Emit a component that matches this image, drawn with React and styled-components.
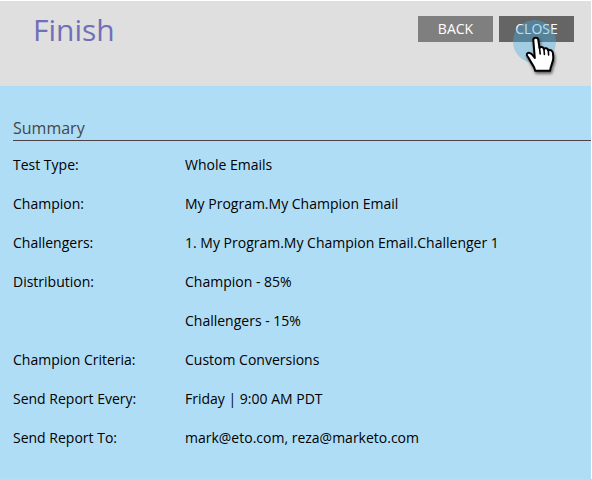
import React from "react";
import styled, { createGlobalStyle } from "styled-components";

const GlobalStyle = createGlobalStyle`
  * { box-sizing: border-box; }
  body {
    margin: 0;
    background: #b0ddf6;
    font-family: "Open Sans", sans-serif;
    font-size: 14px;
    color: #000;
  }
`;

const Page = styled.main`
  min-height: 100vh;
  border-top: 1px solid #fff;
  border-right: 1px solid #fff;
  background: #b0ddf6;
`;

const Header = styled.header`
  display: flex;
  justify-content: space-between;
  align-items: flex-start;
  padding: 8px 17px 35px 33px;
  background: #dfdfdf;
`;

const Title = styled.h1`
  margin: 0;
  font-size: 30px;
  line-height: 42px;
  font-weight: 400;
  color: #716fb8;
`;

const Actions = styled.div`
  display: flex;
  gap: 6px;
  padding-top: 7px;
`;

const Button = styled.button`
  position: relative;
  width: 75px;
  height: 26px;
  padding: 0;
  border: 0;
  background: ${(p) => (p.$active ? "#656565" : "#7f7f7f")};
  color: #fff;
  font: inherit;
  line-height: 26px;
  cursor: pointer;
`;

const Pointer = styled.svg`
  position: absolute;
  left: 13px;
  top: 3px;
  width: 50px;
  height: 60px;
  pointer-events: none;
`;

const Summary = styled.section`
  padding: 30px 0 20px 13px;
`;

const SectionTitle = styled.h2`
  margin: 0 0 4px;
  border-bottom: 1px solid #4b4147;
  font-size: 16px;
  line-height: 24px;
  font-weight: 400;
  color: #464646;
`;

const Details = styled.dl`
  display: grid;
  grid-template-columns: 172px 1fr;
  margin: 0;
  line-height: 39px;
`;

const Label = styled.dt`
  grid-column: 1;
`;

const Value = styled.dd`
  grid-column: 2;
  margin: 0;
`;

const rows = [
  ["Test Type:", ["Whole Emails"]],
  ["Champion:", ["My Program.My Champion Email"]],
  ["Challengers:", ["1. My Program.My Champion Email.Challenger 1"]],
  ["Distribution:", ["Champion - 85%", "Challengers - 15%"]],
  ["Champion Criteria:", ["Custom Conversions"]],
  ["Send Report Every:", ["Friday | 9:00 AM PDT"]],
  ["Send Report To:", ["mark@eto.com, reza@marketo.com"]],
];

function HandPointer() {
  return (
    <Pointer viewBox="0 0 50 60" aria-hidden="true">
      <defs>
        <filter id="hand-shadow" x="-30%" y="-30%" width="170%" height="170%">
          <feDropShadow dx="1" dy="2" stdDeviation="1.5" floodColor="#000" floodOpacity="0.6" />
        </filter>
      </defs>
      <circle cx="22.5" cy="22.5" r="21.5" fill="#46aee6" fillOpacity="0.4" />
      <path
        filter="url(#hand-shadow)"
        d="M21.3 21 C21.3 18 26 18 26.3 21 L27.5 28.8 C28.5 27.4 31.4 27.6 31.9 30 C33 28.7 35.6 29 36.3 31.5 C38.2 30.1 40.6 31.5 40.9 34 L41.3 38.5 C41.5 43 38.8 46 38 51.8 L23.3 51.8 C22.7 47.5 19.2 44.5 17.5 40.5 C16.3 37.8 14 36.8 14.9 35 C16 32.9 19.2 34 20.5 36 L22.8 39 Z"
        fill="#fff"
        stroke="#000"
        strokeWidth="2"
        strokeLinejoin="round"
      />
      <path d="M27.4 28 L28.2 35 M31.9 29.8 L32.4 35.4 M36.3 31.3 L36.6 36" fill="none" stroke="#000" strokeWidth="1.6" strokeLinecap="round" />
    </Pointer>
  );
}

export default function App() {
  return (
    <>
      <GlobalStyle />
      <Page>
        <Header>
          <Title>Finish</Title>
          <Actions>
            <Button type="button">BACK</Button>
            <Button type="button" $active>
              CLOSE
              <HandPointer />
            </Button>
          </Actions>
        </Header>
        <Summary>
          <SectionTitle>Summary</SectionTitle>
          <Details>
            {rows.map(([label, values]) => (
              <React.Fragment key={label}>
                <Label>{label}</Label>
                {values.map((value) => (
                  <Value key={value}>{value}</Value>
                ))}
              </React.Fragment>
            ))}
          </Details>
        </Summary>
      </Page>
    </>
  );
}
